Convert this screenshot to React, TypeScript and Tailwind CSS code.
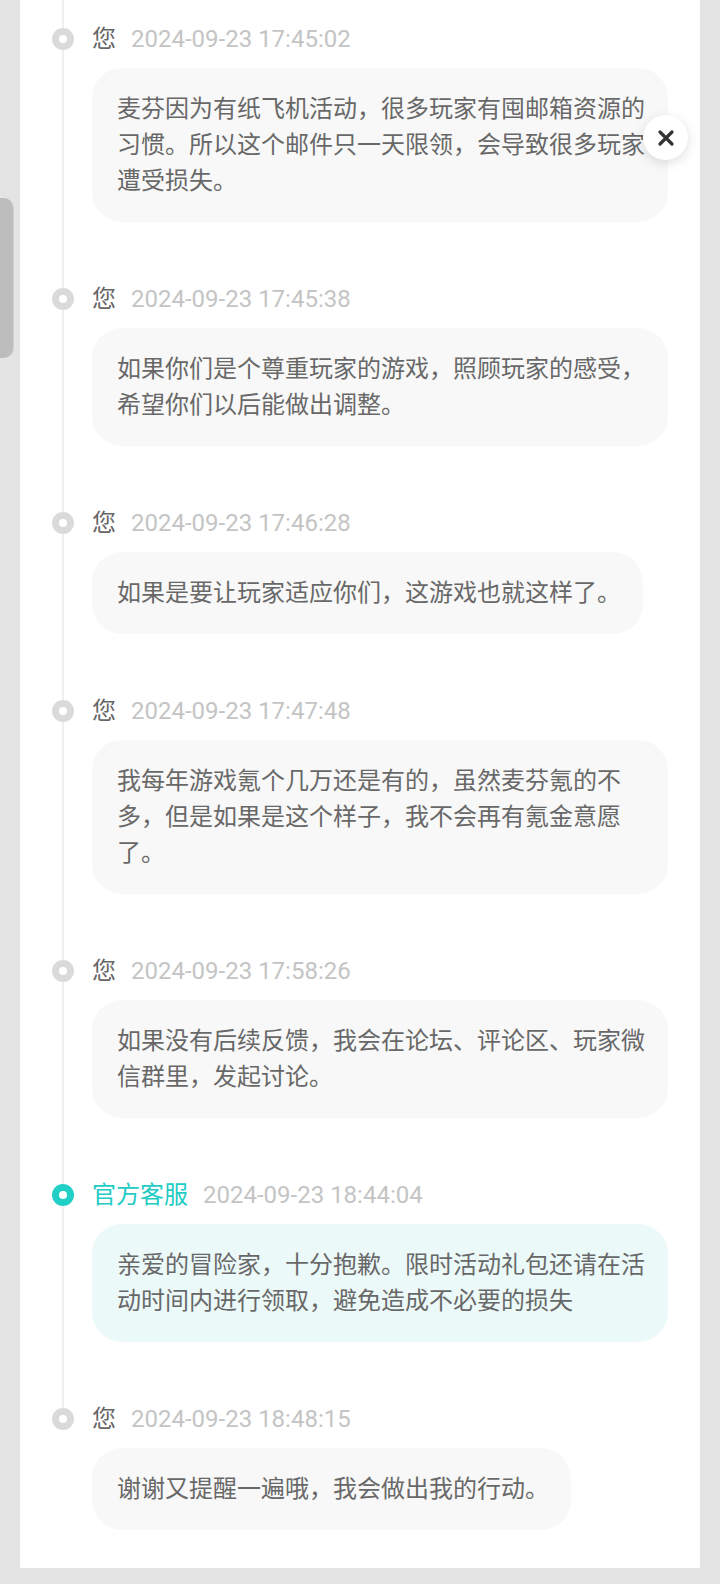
import React from "react";

type Msg = { who: "user" | "staff"; time: string; text: string };

const msgs: Msg[] = [
  { who: "user", time: "2024-09-23 17:45:02", text: "麦芬因为有纸飞机活动，很多玩家有囤邮箱资源的习惯。所以这个邮件只一天限领，会导致很多玩家遭受损失。" },
  { who: "user", time: "2024-09-23 17:45:38", text: "如果你们是个尊重玩家的游戏，照顾玩家的感受，希望你们以后能做出调整。" },
  { who: "user", time: "2024-09-23 17:46:28", text: "如果是要让玩家适应你们，这游戏也就这样了。" },
  { who: "user", time: "2024-09-23 17:47:48", text: "我每年游戏氪个几万还是有的，虽然麦芬氪的不多，但是如果是这个样子，我不会再有氪金意愿了。" },
  { who: "user", time: "2024-09-23 17:58:26", text: "如果没有后续反馈，我会在论坛、评论区、玩家微信群里，发起讨论。" },
  { who: "staff", time: "2024-09-23 18:44:04", text: "亲爱的冒险家，十分抱歉。限时活动礼包还请在活动时间内进行领取，避免造成不必要的损失" },
  { who: "user", time: "2024-09-23 18:48:15", text: "谢谢又提醒一遍哦，我会做出我的行动。" },
];

function Item({ m, first }: { m: Msg; first: boolean }) {
  const staff = m.who === "staff";
  return (
    <div className={`flex flex-col pl-[32px] ${first ? "" : "mt-[62px]"}`}>
      <div className="flex items-center h-[30px] mb-[14px]">
        <div
          className={`w-[22px] h-[22px] rounded-full flex items-center justify-center shrink-0 relative z-10 ${
            staff ? "bg-[#22cfc6]" : "bg-[#dadada]"
          }`}
        >
          <div className="w-[8px] h-[8px] rounded-full bg-white" />
        </div>
        <span className={`ml-[18px] text-[24px] leading-[30px] ${staff ? "text-[#22cbc3]" : "text-[#666666]"}`}>
          {staff ? "官方客服" : "您"}
        </span>
        <span className="ml-[15px] text-[24px] leading-[30px] text-[#c4c4c4]">{m.time}</span>
      </div>
      <div className="ml-[40px]">
        <div
          className={`inline-block max-w-[576px] rounded-[30px] pl-[25px] pr-[22px] py-[23px] text-[24px] leading-[36px] text-[#686868] ${
            staff ? "bg-[#ecf9f9]" : "bg-[#f8f8f8]"
          }`}
        >
          {m.text}
        </div>
      </div>
    </div>
  );
}

export default function App() {
  return (
    <div
      className="relative w-[720px] h-[1584px] bg-[#e4e4e4] overflow-hidden pl-[20px]"
      style={{ fontFamily: "Roboto, 'Noto Sans CJK SC', sans-serif" }}
    >
      <div className="relative w-[680px] h-[1568px] bg-white pt-[24px]">
        <div className="absolute left-[42px] top-0 w-[2px] h-[1408px] bg-[#efefef]" />
        {msgs.map((m, i) => (
          <Item key={i} m={m} first={i === 0} />
        ))}
      </div>
      <div className="absolute left-0 top-[198px] w-[14px] h-[160px] bg-[#bdbdbd] rounded-r-[10px] border-r border-[#cfd3d0]" />
      <button className="absolute left-[643px] top-[115px] w-[45px] h-[45px] rounded-full bg-white shadow-[0_3px_12px_rgba(0,0,0,0.13)] flex items-center justify-center">
        <svg width="18" height="18" viewBox="0 0 18 18" fill="none">
          <path d="M3 3L15 15M15 3L3 15" stroke="#333333" strokeWidth="3.2" strokeLinecap="round" />
        </svg>
      </button>
    </div>
  );
}
